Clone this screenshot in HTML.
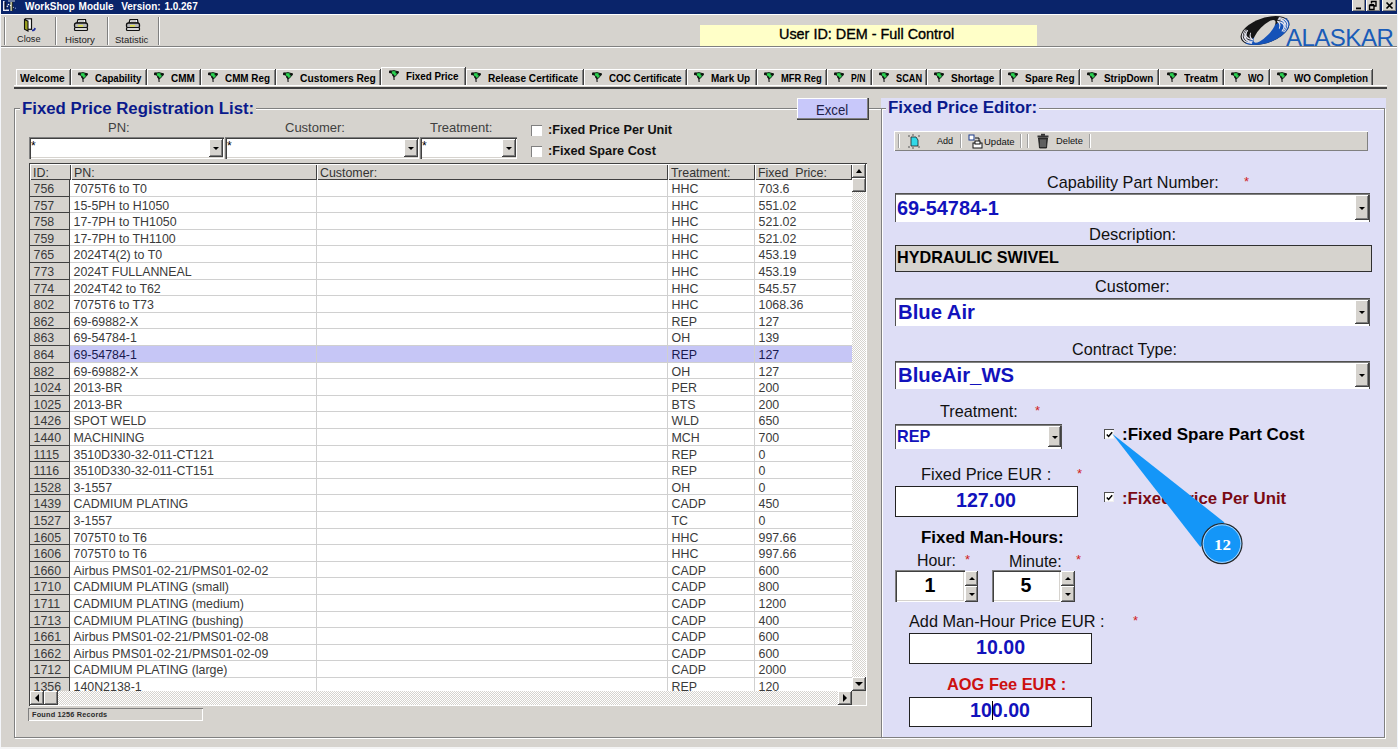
<!DOCTYPE html>
<html><head><meta charset="utf-8">
<style>
*{box-sizing:border-box;margin:0;padding:0}
html,body{width:1398px;height:749px;overflow:hidden;background:#d6d3ce;font-family:"Liberation Sans",sans-serif;position:relative}
.a{position:absolute}
.sunk{background:#fff;box-shadow:inset 1px 1px #808080,inset 2px 2px #404040,inset -1px -1px #fff,inset -2px -2px #d6d3ce}
.raised{background:#d6d3ce;box-shadow:inset -1px -1px #404040,inset 1px 1px #fff,inset -2px -2px #808080}
.tab{position:absolute;background:#d6d3ce;border-top:1px solid #fff;border-left:1px solid #fff;box-shadow:inset -1px 0 #808080, 1px 0 #404040;font:bold 10px "Liberation Sans",sans-serif;color:#000;white-space:nowrap}
.tab span{position:absolute;line-height:10px;transform-origin:0 0}
.tab .fl{position:absolute}
.tab.sel{z-index:2}
.row{position:absolute;left:30px;width:822px;height:17px;font-size:12.4px;color:#3a3a3a;white-space:nowrap}
.row>div{position:absolute;top:0;bottom:0;line-height:19px;padding-left:3.5px}
.row.t>div{background:none!important;border-color:transparent!important}
.c0{left:0;width:40px;background:#d6d3ce;border-bottom:1px solid #404040;border-right:1px solid #404040}
.c1{left:40px;width:247px;background:#fff;border-bottom:1px solid #d0d0d0;border-right:1px solid #d0d0d0}
.c2{left:287px;width:351px;background:#fff;border-bottom:1px solid #d0d0d0;border-right:1px solid #d0d0d0}
.c3{left:638px;width:87px;background:#fff;border-bottom:1px solid #d0d0d0;border-right:1px solid #d0d0d0}
.c4{left:725px;width:97px;background:#fff;border-bottom:1px solid #d0d0d0}
.selrow .c1,.selrow .c2,.selrow .c3,.selrow .c4{background:#c6c6f6;color:#1a1a50}
.hdr{position:absolute;top:164px;height:16px;background:#d6d3ce;box-shadow:inset 1px 1px #fff,inset -1px -1px #404040;font-size:12.4px;color:#333;line-height:18px;padding-left:3px}
.lbl{position:absolute;white-space:nowrap}
.drop{position:absolute;background:#d6d3ce;box-shadow:inset -1px -1px #404040,inset 1px 1px #fff,inset -2px -2px #808080}
.drop:after{content:"";position:absolute;left:50%;top:50%;margin-left:-3px;margin-top:-1px;border-left:3px solid transparent;border-right:3px solid transparent;border-top:3px solid #000}
.drop.up:after{border-top:0;border-bottom:3px solid #000;margin-top:-2px}
.sunkR{background:#fff;box-shadow:inset 1px 1px #505050,inset 0 2px #808080,inset -1px 0 #505050}
.chk{position:absolute;width:11px;height:11px;background:#fff;box-shadow:inset 1px 1px #808080,inset -1px -1px #fff}
.req{position:absolute;color:#d02020;font-size:13px}
</style></head><body>
<!-- title bar -->
<div class="a" style="left:0;top:0;width:1398px;height:14px;background:#0a246a"></div>
<svg class="a" style="left:0;top:0" width="18" height="14" viewBox="0 0 18 14"><rect x="0" y="0" width="1" height="14" fill="#e8ecf4"/><rect x="8" y="0" width="7" height="2" fill="#6a7aa0"/>
<rect x="3" y="1" width="1.6" height="10" fill="#e8e8f4"/><rect x="3" y="9.5" width="6" height="1.5" fill="#e8e8f4"/><rect x="4.6" y="2" width="1.2" height="7.5" fill="#101020"/>
<rect x="10.3" y="2" width="2" height="9" fill="#b8b890"/><rect x="12.3" y="2" width="0.8" height="9" fill="#202010"/>
<circle cx="8.5" cy="4.5" r="0.8" fill="#fff"/><circle cx="7.4" cy="6.4" r="0.8" fill="#ddd"/><circle cx="10.5" cy="5.5" r="0.7" fill="#fff"/><circle cx="13.5" cy="7.3" r="0.6" fill="#bbc"/><circle cx="15.5" cy="8.2" r="0.6" fill="#8899cc"/></svg>
<div class="lbl" style="left:25px;top:0px;color:#fff;font:bold 10px 'Liberation Sans',sans-serif;line-height:13px;word-spacing:1px">WorkShop Module&nbsp; Version: 1.0.267</div>
<div class="a" style="left:1352px;top:0;width:13px;height:11px;background:#d8d4cc;box-shadow:inset 1px 0 #fff,inset -1px -1px #808080"></div>
<div class="a" style="left:1366px;top:0;width:14px;height:11px;background:#d8d4cc;box-shadow:inset 1px 0 #fff,inset -1px -1px #808080"></div>
<div class="a" style="left:1382px;top:0;width:14px;height:11px;background:#d8d4cc;box-shadow:inset 1px 0 #fff,inset -1px -1px #808080"></div>
<svg class="a" style="left:1352px;top:0" width="44" height="11" viewBox="0 0 44 11"><rect x="4" y="7.5" width="5" height="1.8" fill="#000"/>
<path d="M17.5 5.5h4.5v4h-4.5z" fill="none" stroke="#000" stroke-width="1.4"/><path d="M19.5 3.5v-2h4.5v4.5h-2" fill="none" stroke="#000" stroke-width="1.4"/><path d="M17.5 4.5h4.5" stroke="#000" stroke-width="1"/>
<path d="M34.5 2.5l6 6M40.5 2.5l-6 6" stroke="#000" stroke-width="1.7"/></svg>
<div class="a" style="left:0;top:14px;width:1398px;height:1px;background:#fff"></div>
<div class="a" style="left:0;top:0;width:1px;height:749px;background:#f4f6fa;z-index:3"></div>
<!-- toolbar -->
<div class="a" style="left:0;top:46px;width:1398px;height:1px;background:#808080"></div>
<div class="a" style="left:0;top:47px;width:1398px;height:1px;background:#fff"></div>
<div class="a" style="left:4px;top:17px;width:1px;height:28px;background:#808080"></div><div class="a" style="left:5px;top:17px;width:1px;height:28px;background:#fff"></div>
<div class="a" style="left:55px;top:17px;width:1px;height:28px;background:#808080"></div><div class="a" style="left:56px;top:17px;width:1px;height:28px;background:#fff"></div>
<div class="a" style="left:107px;top:17px;width:1px;height:28px;background:#808080"></div><div class="a" style="left:108px;top:17px;width:1px;height:28px;background:#fff"></div>
<div class="a" style="left:158px;top:17px;width:1px;height:28px;background:#808080"></div><div class="a" style="left:159px;top:17px;width:1px;height:28px;background:#fff"></div>
<div class="lbl" style="left:17px;top:34px;font-size:9.2px;color:#222">Close</div>
<div class="lbl" style="left:65px;top:34px;font-size:9.6px;color:#222">History</div>
<div class="lbl" style="left:115px;top:34px;font-size:9.5px;color:#222">Statistic</div>
<svg class="a" style="left:23px;top:18px" width="15" height="14" viewBox="0 0 15 14"><rect x="2.5" y="0.8" width="6" height="10.5" fill="#fff" stroke="#111" stroke-width="1.2"/><path d="M1.5 1.5 L5 3.2 L5 13 L1.5 11.2 Z" fill="#9aa020" stroke="#111" stroke-width="1.1"/><path d="M9 12.5 Q11.5 12.5 12 10.5" stroke="#2030a0" stroke-width="1.6" fill="none"/><path d="M10.8 9.6 L13 10.6 L11.4 11.8 Z" fill="#2030a0"/></svg>
<svg class="a" style="left:73px;top:18px" width="16" height="14" viewBox="0 0 16 14"><path d="M5 1.5 L12.5 1.5 L13 5 L4 5 Z" fill="#f4f4f4" stroke="#111" stroke-width="1.2"/><path d="M6 3h5" stroke="#888" stroke-width="0.8"/><rect x="1.5" y="5" width="13" height="5" rx="2" fill="#b8b8b8" stroke="#111" stroke-width="1.3"/><rect x="5" y="7.2" width="5" height="1.3" fill="#e8e830"/><rect x="1.5" y="9.5" width="13" height="3" rx="1" fill="#d8d8d8" stroke="#111" stroke-width="1.2"/></svg>
<svg class="a" style="left:125px;top:18px" width="16" height="14" viewBox="0 0 16 14"><path d="M5 1.5 L12.5 1.5 L13 5 L4 5 Z" fill="#f4f4f4" stroke="#111" stroke-width="1.2"/><path d="M6 3h5" stroke="#888" stroke-width="0.8"/><rect x="1.5" y="5" width="13" height="5" rx="2" fill="#b8b8b8" stroke="#111" stroke-width="1.3"/><rect x="5" y="7.2" width="5" height="1.3" fill="#e8e830"/><rect x="1.5" y="9.5" width="13" height="3" rx="1" fill="#d8d8d8" stroke="#111" stroke-width="1.2"/></svg>
<!-- user id -->
<div class="a" style="left:700px;top:25px;width:337px;height:21px;background:#ffffc8"></div>
<div class="lbl" style="left:779px;top:26px;font-size:14.4px;color:#000;line-height:17px;-webkit-text-stroke:0.35px #000">User ID: DEM - Full Control</div>
<!-- logo -->
<svg class="a" style="left:1238px;top:15px" width="54" height="32" viewBox="0 0 54 32">
<defs><clipPath id="lc"><ellipse cx="0" cy="0" rx="22" ry="14.5" transform="translate(27 15.5) skewX(-36)"/></clipPath>
<clipPath id="le"><circle cx="5" cy="24" r="10"/><circle cx="49" cy="8" r="10"/></clipPath></defs>
<g clip-path="url(#lc)">
<rect x="0" y="0" width="54" height="32" fill="#161616"/>
<path d="M0 32 L4 30 L48 3 L54 0 L54 32 Z" fill="#1552b8"/>
</g>
<g clip-path="url(#le)"><g transform="translate(27 15.5) skewX(-36)" fill="none" stroke="#e4e4ee" stroke-width="0.9">
<ellipse cx="1.5" cy="0" rx="19" ry="13"/><ellipse cx="3" cy="0" rx="16" ry="11"/><ellipse cx="4.5" cy="0" rx="13" ry="9"/>
<ellipse cx="-1.5" cy="0" rx="19" ry="13"/><ellipse cx="-3" cy="0" rx="16" ry="11"/><ellipse cx="-4.5" cy="0" rx="13" ry="9"/>
</g></g>
<ellipse cx="0" cy="0" rx="15" ry="5" transform="translate(26.5 16.3) rotate(-46)" fill="#d6d3ce"/>
</svg>
<div class="lbl" style="left:1286px;top:24px;font-size:24px;color:#1a5cb8;letter-spacing:-0.5px;line-height:28px">ALASKAR</div>
<!-- tabs -->
<div class="a" style="left:14px;top:85px;width:1373px;height:1px;background:#fff"></div>
<div class="a" style="left:14px;top:87px;width:1373px;height:2px;background:#404040"></div>
<div class="tab" style="left:16px;top:69px;width:54px;height:16px"><span style="left:3.00px;top:3.700000000000003px;transform:scaleX(1.021)">Welcome</span></div>
<div class="tab" style="left:71px;top:69px;width:75px;height:16px"><svg class="fl" style="left:6.10px;top:1.5px" width="11" height="12" viewBox="0 0 11 12"><path d="M1.5 1.2 L5 0.6 L9.3 1.8 L8.2 4.3 L5.6 6.8 L3.2 4.2 Z" fill="#2ad050" stroke="#0a160a" stroke-width="0.9" stroke-linejoin="round"/><rect x="0" y="0.4" width="2.7" height="2.8" rx="0.8" fill="#111"/><rect x="6.6" y="1.2" width="3.2" height="2.3" rx="0.8" fill="#111"/><path d="M3.6 4.6 L5.4 7" stroke="#111" stroke-width="1.6"/><path d="M4.9 7 L5.1 10" stroke="#222" stroke-width="1.2"/></svg><span style="left:23.10px;top:3.700000000000003px;transform:scaleX(0.969)">Capability</span></div>
<div class="tab" style="left:147px;top:69px;width:53px;height:16px"><svg class="fl" style="left:6.00px;top:1.5px" width="11" height="12" viewBox="0 0 11 12"><path d="M1.5 1.2 L5 0.6 L9.3 1.8 L8.2 4.3 L5.6 6.8 L3.2 4.2 Z" fill="#2ad050" stroke="#0a160a" stroke-width="0.9" stroke-linejoin="round"/><rect x="0" y="0.4" width="2.7" height="2.8" rx="0.8" fill="#111"/><rect x="6.6" y="1.2" width="3.2" height="2.3" rx="0.8" fill="#111"/><path d="M3.6 4.6 L5.4 7" stroke="#111" stroke-width="1.6"/><path d="M4.9 7 L5.1 10" stroke="#222" stroke-width="1.2"/></svg><span style="left:23.00px;top:3.700000000000003px;transform:scaleX(0.996)">CMM</span></div>
<div class="tab" style="left:201px;top:69px;width:74px;height:16px"><svg class="fl" style="left:6.30px;top:1.5px" width="11" height="12" viewBox="0 0 11 12"><path d="M1.5 1.2 L5 0.6 L9.3 1.8 L8.2 4.3 L5.6 6.8 L3.2 4.2 Z" fill="#2ad050" stroke="#0a160a" stroke-width="0.9" stroke-linejoin="round"/><rect x="0" y="0.4" width="2.7" height="2.8" rx="0.8" fill="#111"/><rect x="6.6" y="1.2" width="3.2" height="2.3" rx="0.8" fill="#111"/><path d="M3.6 4.6 L5.4 7" stroke="#111" stroke-width="1.6"/><path d="M4.9 7 L5.1 10" stroke="#222" stroke-width="1.2"/></svg><span style="left:23.30px;top:3.700000000000003px;transform:scaleX(0.987)">CMM Reg</span></div>
<div class="tab" style="left:276px;top:69px;width:104px;height:16px"><svg class="fl" style="left:6.40px;top:1.5px" width="11" height="12" viewBox="0 0 11 12"><path d="M1.5 1.2 L5 0.6 L9.3 1.8 L8.2 4.3 L5.6 6.8 L3.2 4.2 Z" fill="#2ad050" stroke="#0a160a" stroke-width="0.9" stroke-linejoin="round"/><rect x="0" y="0.4" width="2.7" height="2.8" rx="0.8" fill="#111"/><rect x="6.6" y="1.2" width="3.2" height="2.3" rx="0.8" fill="#111"/><path d="M3.6 4.6 L5.4 7" stroke="#111" stroke-width="1.6"/><path d="M4.9 7 L5.1 10" stroke="#222" stroke-width="1.2"/></svg><span style="left:23.40px;top:3.700000000000003px;transform:scaleX(1.026)">Customers Reg</span></div>
<div class="tab sel" style="left:381px;top:67px;width:84px;height:18px"><svg class="fl" style="left:6.60px;top:1.5px" width="11" height="12" viewBox="0 0 11 12"><path d="M1.5 1.2 L5 0.6 L9.3 1.8 L8.2 4.3 L5.6 6.8 L3.2 4.2 Z" fill="#2ad050" stroke="#0a160a" stroke-width="0.9" stroke-linejoin="round"/><rect x="0" y="0.4" width="2.7" height="2.8" rx="0.8" fill="#111"/><rect x="6.6" y="1.2" width="3.2" height="2.3" rx="0.8" fill="#111"/><path d="M3.6 4.6 L5.4 7" stroke="#111" stroke-width="1.6"/><path d="M4.9 7 L5.1 10" stroke="#222" stroke-width="1.2"/></svg><span style="left:23.60px;top:3.700000000000003px;transform:scaleX(0.985)">Fixed Price</span></div>
<div class="tab" style="left:466px;top:69px;width:117px;height:16px"><svg class="fl" style="left:4.20px;top:1.5px" width="11" height="12" viewBox="0 0 11 12"><path d="M1.5 1.2 L5 0.6 L9.3 1.8 L8.2 4.3 L5.6 6.8 L3.2 4.2 Z" fill="#2ad050" stroke="#0a160a" stroke-width="0.9" stroke-linejoin="round"/><rect x="0" y="0.4" width="2.7" height="2.8" rx="0.8" fill="#111"/><rect x="6.6" y="1.2" width="3.2" height="2.3" rx="0.8" fill="#111"/><path d="M3.6 4.6 L5.4 7" stroke="#111" stroke-width="1.6"/><path d="M4.9 7 L5.1 10" stroke="#222" stroke-width="1.2"/></svg><span style="left:21.20px;top:3.700000000000003px;transform:scaleX(1.007)">Release Certificate</span></div>
<div class="tab" style="left:584px;top:69px;width:102px;height:16px"><svg class="fl" style="left:7.10px;top:1.5px" width="11" height="12" viewBox="0 0 11 12"><path d="M1.5 1.2 L5 0.6 L9.3 1.8 L8.2 4.3 L5.6 6.8 L3.2 4.2 Z" fill="#2ad050" stroke="#0a160a" stroke-width="0.9" stroke-linejoin="round"/><rect x="0" y="0.4" width="2.7" height="2.8" rx="0.8" fill="#111"/><rect x="6.6" y="1.2" width="3.2" height="2.3" rx="0.8" fill="#111"/><path d="M3.6 4.6 L5.4 7" stroke="#111" stroke-width="1.6"/><path d="M4.9 7 L5.1 10" stroke="#222" stroke-width="1.2"/></svg><span style="left:24.10px;top:3.700000000000003px;transform:scaleX(0.982)">COC Certificate</span></div>
<div class="tab" style="left:687px;top:69px;width:69px;height:16px"><svg class="fl" style="left:6.30px;top:1.5px" width="11" height="12" viewBox="0 0 11 12"><path d="M1.5 1.2 L5 0.6 L9.3 1.8 L8.2 4.3 L5.6 6.8 L3.2 4.2 Z" fill="#2ad050" stroke="#0a160a" stroke-width="0.9" stroke-linejoin="round"/><rect x="0" y="0.4" width="2.7" height="2.8" rx="0.8" fill="#111"/><rect x="6.6" y="1.2" width="3.2" height="2.3" rx="0.8" fill="#111"/><path d="M3.6 4.6 L5.4 7" stroke="#111" stroke-width="1.6"/><path d="M4.9 7 L5.1 10" stroke="#222" stroke-width="1.2"/></svg><span style="left:23.30px;top:3.700000000000003px;transform:scaleX(0.992)">Mark Up</span></div>
<div class="tab" style="left:757px;top:69px;width:69px;height:16px"><svg class="fl" style="left:5.50px;top:1.5px" width="11" height="12" viewBox="0 0 11 12"><path d="M1.5 1.2 L5 0.6 L9.3 1.8 L8.2 4.3 L5.6 6.8 L3.2 4.2 Z" fill="#2ad050" stroke="#0a160a" stroke-width="0.9" stroke-linejoin="round"/><rect x="0" y="0.4" width="2.7" height="2.8" rx="0.8" fill="#111"/><rect x="6.6" y="1.2" width="3.2" height="2.3" rx="0.8" fill="#111"/><path d="M3.6 4.6 L5.4 7" stroke="#111" stroke-width="1.6"/><path d="M4.9 7 L5.1 10" stroke="#222" stroke-width="1.2"/></svg><span style="left:22.50px;top:3.700000000000003px;transform:scaleX(0.941)">MFR Reg</span></div>
<div class="tab" style="left:827px;top:69px;width:44px;height:16px"><svg class="fl" style="left:6.25px;top:1.5px" width="11" height="12" viewBox="0 0 11 12"><path d="M1.5 1.2 L5 0.6 L9.3 1.8 L8.2 4.3 L5.6 6.8 L3.2 4.2 Z" fill="#2ad050" stroke="#0a160a" stroke-width="0.9" stroke-linejoin="round"/><rect x="0" y="0.4" width="2.7" height="2.8" rx="0.8" fill="#111"/><rect x="6.6" y="1.2" width="3.2" height="2.3" rx="0.8" fill="#111"/><path d="M3.6 4.6 L5.4 7" stroke="#111" stroke-width="1.6"/><path d="M4.9 7 L5.1 10" stroke="#222" stroke-width="1.2"/></svg><span style="left:23.25px;top:3.700000000000003px;transform:scaleX(0.868)">P/N</span></div>
<div class="tab" style="left:872px;top:69px;width:54px;height:16px"><svg class="fl" style="left:5.75px;top:1.5px" width="11" height="12" viewBox="0 0 11 12"><path d="M1.5 1.2 L5 0.6 L9.3 1.8 L8.2 4.3 L5.6 6.8 L3.2 4.2 Z" fill="#2ad050" stroke="#0a160a" stroke-width="0.9" stroke-linejoin="round"/><rect x="0" y="0.4" width="2.7" height="2.8" rx="0.8" fill="#111"/><rect x="6.6" y="1.2" width="3.2" height="2.3" rx="0.8" fill="#111"/><path d="M3.6 4.6 L5.4 7" stroke="#111" stroke-width="1.6"/><path d="M4.9 7 L5.1 10" stroke="#222" stroke-width="1.2"/></svg><span style="left:22.75px;top:3.700000000000003px;transform:scaleX(0.919)">SCAN</span></div>
<div class="tab" style="left:927px;top:69px;width:73px;height:16px"><svg class="fl" style="left:6.25px;top:1.5px" width="11" height="12" viewBox="0 0 11 12"><path d="M1.5 1.2 L5 0.6 L9.3 1.8 L8.2 4.3 L5.6 6.8 L3.2 4.2 Z" fill="#2ad050" stroke="#0a160a" stroke-width="0.9" stroke-linejoin="round"/><rect x="0" y="0.4" width="2.7" height="2.8" rx="0.8" fill="#111"/><rect x="6.6" y="1.2" width="3.2" height="2.3" rx="0.8" fill="#111"/><path d="M3.6 4.6 L5.4 7" stroke="#111" stroke-width="1.6"/><path d="M4.9 7 L5.1 10" stroke="#222" stroke-width="1.2"/></svg><span style="left:23.25px;top:3.700000000000003px;transform:scaleX(0.999)">Shortage</span></div>
<div class="tab" style="left:1001px;top:69px;width:78px;height:16px"><svg class="fl" style="left:5.50px;top:1.5px" width="11" height="12" viewBox="0 0 11 12"><path d="M1.5 1.2 L5 0.6 L9.3 1.8 L8.2 4.3 L5.6 6.8 L3.2 4.2 Z" fill="#2ad050" stroke="#0a160a" stroke-width="0.9" stroke-linejoin="round"/><rect x="0" y="0.4" width="2.7" height="2.8" rx="0.8" fill="#111"/><rect x="6.6" y="1.2" width="3.2" height="2.3" rx="0.8" fill="#111"/><path d="M3.6 4.6 L5.4 7" stroke="#111" stroke-width="1.6"/><path d="M4.9 7 L5.1 10" stroke="#222" stroke-width="1.2"/></svg><span style="left:22.50px;top:3.700000000000003px;transform:scaleX(1.002)">Spare Reg</span></div>
<div class="tab" style="left:1080px;top:69px;width:78px;height:16px"><svg class="fl" style="left:6.00px;top:1.5px" width="11" height="12" viewBox="0 0 11 12"><path d="M1.5 1.2 L5 0.6 L9.3 1.8 L8.2 4.3 L5.6 6.8 L3.2 4.2 Z" fill="#2ad050" stroke="#0a160a" stroke-width="0.9" stroke-linejoin="round"/><rect x="0" y="0.4" width="2.7" height="2.8" rx="0.8" fill="#111"/><rect x="6.6" y="1.2" width="3.2" height="2.3" rx="0.8" fill="#111"/><path d="M3.6 4.6 L5.4 7" stroke="#111" stroke-width="1.6"/><path d="M4.9 7 L5.1 10" stroke="#222" stroke-width="1.2"/></svg><span style="left:23.00px;top:3.700000000000003px;transform:scaleX(0.986)">StripDown</span></div>
<div class="tab" style="left:1159px;top:69px;width:64px;height:16px"><svg class="fl" style="left:7.00px;top:1.5px" width="11" height="12" viewBox="0 0 11 12"><path d="M1.5 1.2 L5 0.6 L9.3 1.8 L8.2 4.3 L5.6 6.8 L3.2 4.2 Z" fill="#2ad050" stroke="#0a160a" stroke-width="0.9" stroke-linejoin="round"/><rect x="0" y="0.4" width="2.7" height="2.8" rx="0.8" fill="#111"/><rect x="6.6" y="1.2" width="3.2" height="2.3" rx="0.8" fill="#111"/><path d="M3.6 4.6 L5.4 7" stroke="#111" stroke-width="1.6"/><path d="M4.9 7 L5.1 10" stroke="#222" stroke-width="1.2"/></svg><span style="left:24.00px;top:3.700000000000003px;transform:scaleX(1.037)">Treatm</span></div>
<div class="tab" style="left:1224px;top:69px;width:45px;height:16px"><svg class="fl" style="left:5.90px;top:1.5px" width="11" height="12" viewBox="0 0 11 12"><path d="M1.5 1.2 L5 0.6 L9.3 1.8 L8.2 4.3 L5.6 6.8 L3.2 4.2 Z" fill="#2ad050" stroke="#0a160a" stroke-width="0.9" stroke-linejoin="round"/><rect x="0" y="0.4" width="2.7" height="2.8" rx="0.8" fill="#111"/><rect x="6.6" y="1.2" width="3.2" height="2.3" rx="0.8" fill="#111"/><path d="M3.6 4.6 L5.4 7" stroke="#111" stroke-width="1.6"/><path d="M4.9 7 L5.1 10" stroke="#222" stroke-width="1.2"/></svg><span style="left:22.90px;top:3.700000000000003px;transform:scaleX(0.913)">WO</span></div>
<div class="tab" style="left:1270px;top:69px;width:102px;height:16px"><svg class="fl" style="left:5.50px;top:1.5px" width="11" height="12" viewBox="0 0 11 12"><path d="M1.5 1.2 L5 0.6 L9.3 1.8 L8.2 4.3 L5.6 6.8 L3.2 4.2 Z" fill="#2ad050" stroke="#0a160a" stroke-width="0.9" stroke-linejoin="round"/><rect x="0" y="0.4" width="2.7" height="2.8" rx="0.8" fill="#111"/><rect x="6.6" y="1.2" width="3.2" height="2.3" rx="0.8" fill="#111"/><path d="M3.6 4.6 L5.4 7" stroke="#111" stroke-width="1.6"/><path d="M4.9 7 L5.1 10" stroke="#222" stroke-width="1.2"/></svg><span style="left:22.50px;top:3.700000000000003px;transform:scaleX(0.987)">WO Completion</span></div>
<!-- left group box -->
<div class="a" style="left:14px;top:108px;width:871px;height:630px;border:1px solid #808080;box-shadow:inset 1px 1px #fff, 1px 1px #fff"></div>
<div class="lbl" style="left:20px;top:99px;padding:0 2px;background:#d6d3ce;font:bold 16.8px 'Liberation Sans',sans-serif;color:#0a1a8c;line-height:20px">Fixed Price Registration List:</div>
<div class="lbl" style="left:108px;top:120px;font-size:13px;color:#404040">PN:</div>
<div class="lbl" style="left:285px;top:120px;font-size:13px;color:#404040">Customer:</div>
<div class="lbl" style="left:430px;top:120px;font-size:13px;color:#404040">Treatment:</div>
<div class="a sunk" style="left:29px;top:137px;width:195px;height:22px"></div>
<div class="a sunk" style="left:225px;top:137px;width:194px;height:22px"></div>
<div class="a sunk" style="left:420px;top:137px;width:97px;height:22px"></div>
<div class="lbl" style="left:31px;top:139px;font-size:12px">*</div>
<div class="lbl" style="left:227px;top:139px;font-size:12px">*</div>
<div class="lbl" style="left:422px;top:139px;font-size:12px">*</div>
<div class="drop" style="left:209px;top:139px;width:14px;height:18px"></div>
<div class="drop" style="left:404px;top:139px;width:14px;height:18px"></div>
<div class="drop" style="left:502px;top:139px;width:14px;height:18px"></div>
<div class="chk" style="left:531px;top:125px"></div>
<div class="chk" style="left:531px;top:146px"></div>
<div class="lbl" style="left:548px;top:123px;font:bold 12.7px 'Liberation Sans';color:#111">:Fixed Price Per Unit</div>
<div class="lbl" style="left:548px;top:144px;font:bold 12.7px 'Liberation Sans';color:#111">:Fixed Spare Cost</div>
<!-- excel button -->
<div class="a" style="left:797px;top:98px;width:72px;height:22px;background:#c8c8fa;box-shadow:inset -1px -1px #404040,inset -2px -2px #808080,inset 1px 1px #fff"></div>
<div class="lbl" style="left:815.5px;top:100.7px;font-size:14.8px;color:#202048;line-height:18px;transform:scaleX(0.89);transform-origin:0 0">Excel</div>
<!-- grid -->
<div class="a" style="left:29px;top:163px;width:838px;height:543px;background:#d6d3ce;box-shadow:inset 1px 1px #404040,inset -1px -1px #fff"></div>
<div class="hdr" style="left:30px;width:41px">ID:</div>
<div class="hdr" style="left:71px;width:246px">PN:</div>
<div class="hdr" style="left:317px;width:351px">Customer:</div>
<div class="hdr" style="left:668px;width:87px">Treatment:</div>
<div class="hdr" style="left:755px;width:97px">Fixed_Price:</div>
<div class="a" style="left:30px;top:180px;width:822px;height:511px;overflow:hidden">
<div style="position:absolute;left:-30px;top:-180px;width:900px;height:800px">
<div class="row" style="top:180px;height:17px"><div class="c0"></div><div class="c1"></div><div class="c2"></div><div class="c3"></div><div class="c4"></div></div>
<div class="row" style="top:197px;height:16px"><div class="c0"></div><div class="c1"></div><div class="c2"></div><div class="c3"></div><div class="c4"></div></div>
<div class="row" style="top:213px;height:17px"><div class="c0"></div><div class="c1"></div><div class="c2"></div><div class="c3"></div><div class="c4"></div></div>
<div class="row" style="top:230px;height:16px"><div class="c0"></div><div class="c1"></div><div class="c2"></div><div class="c3"></div><div class="c4"></div></div>
<div class="row" style="top:246px;height:17px"><div class="c0"></div><div class="c1"></div><div class="c2"></div><div class="c3"></div><div class="c4"></div></div>
<div class="row" style="top:263px;height:17px"><div class="c0"></div><div class="c1"></div><div class="c2"></div><div class="c3"></div><div class="c4"></div></div>
<div class="row" style="top:280px;height:16px"><div class="c0"></div><div class="c1"></div><div class="c2"></div><div class="c3"></div><div class="c4"></div></div>
<div class="row" style="top:296px;height:17px"><div class="c0"></div><div class="c1"></div><div class="c2"></div><div class="c3"></div><div class="c4"></div></div>
<div class="row" style="top:313px;height:16px"><div class="c0"></div><div class="c1"></div><div class="c2"></div><div class="c3"></div><div class="c4"></div></div>
<div class="row" style="top:329px;height:17px"><div class="c0"></div><div class="c1"></div><div class="c2"></div><div class="c3"></div><div class="c4"></div></div>
<div class="row selrow" style="top:346px;height:17px"><div class="c0"></div><div class="c1"></div><div class="c2"></div><div class="c3"></div><div class="c4"></div></div>
<div class="row" style="top:363px;height:16px"><div class="c0"></div><div class="c1"></div><div class="c2"></div><div class="c3"></div><div class="c4"></div></div>
<div class="row" style="top:379px;height:17px"><div class="c0"></div><div class="c1"></div><div class="c2"></div><div class="c3"></div><div class="c4"></div></div>
<div class="row" style="top:396px;height:16px"><div class="c0"></div><div class="c1"></div><div class="c2"></div><div class="c3"></div><div class="c4"></div></div>
<div class="row" style="top:412px;height:17px"><div class="c0"></div><div class="c1"></div><div class="c2"></div><div class="c3"></div><div class="c4"></div></div>
<div class="row" style="top:429px;height:17px"><div class="c0"></div><div class="c1"></div><div class="c2"></div><div class="c3"></div><div class="c4"></div></div>
<div class="row" style="top:446px;height:16px"><div class="c0"></div><div class="c1"></div><div class="c2"></div><div class="c3"></div><div class="c4"></div></div>
<div class="row" style="top:462px;height:17px"><div class="c0"></div><div class="c1"></div><div class="c2"></div><div class="c3"></div><div class="c4"></div></div>
<div class="row" style="top:479px;height:16px"><div class="c0"></div><div class="c1"></div><div class="c2"></div><div class="c3"></div><div class="c4"></div></div>
<div class="row" style="top:495px;height:17px"><div class="c0"></div><div class="c1"></div><div class="c2"></div><div class="c3"></div><div class="c4"></div></div>
<div class="row" style="top:512px;height:17px"><div class="c0"></div><div class="c1"></div><div class="c2"></div><div class="c3"></div><div class="c4"></div></div>
<div class="row" style="top:529px;height:16px"><div class="c0"></div><div class="c1"></div><div class="c2"></div><div class="c3"></div><div class="c4"></div></div>
<div class="row" style="top:545px;height:17px"><div class="c0"></div><div class="c1"></div><div class="c2"></div><div class="c3"></div><div class="c4"></div></div>
<div class="row" style="top:562px;height:16px"><div class="c0"></div><div class="c1"></div><div class="c2"></div><div class="c3"></div><div class="c4"></div></div>
<div class="row" style="top:578px;height:17px"><div class="c0"></div><div class="c1"></div><div class="c2"></div><div class="c3"></div><div class="c4"></div></div>
<div class="row" style="top:595px;height:17px"><div class="c0"></div><div class="c1"></div><div class="c2"></div><div class="c3"></div><div class="c4"></div></div>
<div class="row" style="top:612px;height:16px"><div class="c0"></div><div class="c1"></div><div class="c2"></div><div class="c3"></div><div class="c4"></div></div>
<div class="row" style="top:628px;height:17px"><div class="c0"></div><div class="c1"></div><div class="c2"></div><div class="c3"></div><div class="c4"></div></div>
<div class="row" style="top:645px;height:16px"><div class="c0"></div><div class="c1"></div><div class="c2"></div><div class="c3"></div><div class="c4"></div></div>
<div class="row" style="top:661px;height:17px"><div class="c0"></div><div class="c1"></div><div class="c2"></div><div class="c3"></div><div class="c4"></div></div>
<div class="row" style="top:678px;height:17px"><div class="c0"></div><div class="c1"></div><div class="c2"></div><div class="c3"></div><div class="c4"></div></div>
<div class="row t" style="top:180px;height:17px"><div class="c0">756</div><div class="c1">7075T6 to T0</div><div class="c2"></div><div class="c3">HHC</div><div class="c4">703.6</div></div>
<div class="row t" style="top:197px;height:16px"><div class="c0">757</div><div class="c1">15-5PH to H1050</div><div class="c2"></div><div class="c3">HHC</div><div class="c4">551.02</div></div>
<div class="row t" style="top:213px;height:17px"><div class="c0">758</div><div class="c1">17-7PH to TH1050</div><div class="c2"></div><div class="c3">HHC</div><div class="c4">521.02</div></div>
<div class="row t" style="top:230px;height:16px"><div class="c0">759</div><div class="c1">17-7PH to TH1100</div><div class="c2"></div><div class="c3">HHC</div><div class="c4">521.02</div></div>
<div class="row t" style="top:246px;height:17px"><div class="c0">765</div><div class="c1">2024T4(2) to T0</div><div class="c2"></div><div class="c3">HHC</div><div class="c4">453.19</div></div>
<div class="row t" style="top:263px;height:17px"><div class="c0">773</div><div class="c1">2024T FULLANNEAL</div><div class="c2"></div><div class="c3">HHC</div><div class="c4">453.19</div></div>
<div class="row t" style="top:280px;height:16px"><div class="c0">774</div><div class="c1">2024T42 to T62</div><div class="c2"></div><div class="c3">HHC</div><div class="c4">545.57</div></div>
<div class="row t" style="top:296px;height:17px"><div class="c0">802</div><div class="c1">7075T6 to T73</div><div class="c2"></div><div class="c3">HHC</div><div class="c4">1068.36</div></div>
<div class="row t" style="top:313px;height:16px"><div class="c0">862</div><div class="c1">69-69882-X</div><div class="c2"></div><div class="c3">REP</div><div class="c4">127</div></div>
<div class="row t" style="top:329px;height:17px"><div class="c0">863</div><div class="c1">69-54784-1</div><div class="c2"></div><div class="c3">OH</div><div class="c4">139</div></div>
<div class="row t selrow" style="top:346px;height:17px"><div class="c0">864</div><div class="c1">69-54784-1</div><div class="c2"></div><div class="c3">REP</div><div class="c4">127</div></div>
<div class="row t" style="top:363px;height:16px"><div class="c0">882</div><div class="c1">69-69882-X</div><div class="c2"></div><div class="c3">OH</div><div class="c4">127</div></div>
<div class="row t" style="top:379px;height:17px"><div class="c0">1024</div><div class="c1">2013-BR</div><div class="c2"></div><div class="c3">PER</div><div class="c4">200</div></div>
<div class="row t" style="top:396px;height:16px"><div class="c0">1025</div><div class="c1">2013-BR</div><div class="c2"></div><div class="c3">BTS</div><div class="c4">200</div></div>
<div class="row t" style="top:412px;height:17px"><div class="c0">1426</div><div class="c1">SPOT WELD</div><div class="c2"></div><div class="c3">WLD</div><div class="c4">650</div></div>
<div class="row t" style="top:429px;height:17px"><div class="c0">1440</div><div class="c1">MACHINING</div><div class="c2"></div><div class="c3">MCH</div><div class="c4">700</div></div>
<div class="row t" style="top:446px;height:16px"><div class="c0">1115</div><div class="c1">3510D330-32-011-CT121</div><div class="c2"></div><div class="c3">REP</div><div class="c4">0</div></div>
<div class="row t" style="top:462px;height:17px"><div class="c0">1116</div><div class="c1">3510D330-32-011-CT151</div><div class="c2"></div><div class="c3">REP</div><div class="c4">0</div></div>
<div class="row t" style="top:479px;height:16px"><div class="c0">1528</div><div class="c1">3-1557</div><div class="c2"></div><div class="c3">OH</div><div class="c4">0</div></div>
<div class="row t" style="top:495px;height:17px"><div class="c0">1439</div><div class="c1">CADMIUM PLATING</div><div class="c2"></div><div class="c3">CADP</div><div class="c4">450</div></div>
<div class="row t" style="top:512px;height:17px"><div class="c0">1527</div><div class="c1">3-1557</div><div class="c2"></div><div class="c3">TC</div><div class="c4">0</div></div>
<div class="row t" style="top:529px;height:16px"><div class="c0">1605</div><div class="c1">7075T0 to T6</div><div class="c2"></div><div class="c3">HHC</div><div class="c4">997.66</div></div>
<div class="row t" style="top:545px;height:17px"><div class="c0">1606</div><div class="c1">7075T0 to T6</div><div class="c2"></div><div class="c3">HHC</div><div class="c4">997.66</div></div>
<div class="row t" style="top:562px;height:16px"><div class="c0">1660</div><div class="c1">Airbus PMS01-02-21/PMS01-02-02</div><div class="c2"></div><div class="c3">CADP</div><div class="c4">600</div></div>
<div class="row t" style="top:578px;height:17px"><div class="c0">1710</div><div class="c1">CADMIUM PLATING (small)</div><div class="c2"></div><div class="c3">CADP</div><div class="c4">800</div></div>
<div class="row t" style="top:595px;height:17px"><div class="c0">1711</div><div class="c1">CADMIUM PLATING (medium)</div><div class="c2"></div><div class="c3">CADP</div><div class="c4">1200</div></div>
<div class="row t" style="top:612px;height:16px"><div class="c0">1713</div><div class="c1">CADMIUM PLATING (bushing)</div><div class="c2"></div><div class="c3">CADP</div><div class="c4">400</div></div>
<div class="row t" style="top:628px;height:17px"><div class="c0">1661</div><div class="c1">Airbus PMS01-02-21/PMS01-02-08</div><div class="c2"></div><div class="c3">CADP</div><div class="c4">600</div></div>
<div class="row t" style="top:645px;height:16px"><div class="c0">1662</div><div class="c1">Airbus PMS01-02-21/PMS01-02-09</div><div class="c2"></div><div class="c3">CADP</div><div class="c4">600</div></div>
<div class="row t" style="top:661px;height:17px"><div class="c0">1712</div><div class="c1">CADMIUM PLATING (large)</div><div class="c2"></div><div class="c3">CADP</div><div class="c4">2000</div></div>
<div class="row t" style="top:678px;height:17px"><div class="c0">1356</div><div class="c1">140N2138-1</div><div class="c2"></div><div class="c3">REP</div><div class="c4">120</div></div>
</div></div>
<!-- vertical scrollbar -->
<div class="a" style="left:852px;top:164px;width:14px;height:527px;background:repeating-conic-gradient(#fff 0 25%, #d6d3ce 0 50%) 0 0/2px 2px"></div>
<div class="a raised" style="left:852px;top:164px;width:14px;height:14px"></div>
<div class="a" style="left:855.5px;top:169px;border-left:3.5px solid transparent;border-right:3.5px solid transparent;border-bottom:4px solid #000;width:0;height:0"></div>
<div class="a raised" style="left:852px;top:178px;width:14px;height:14px"></div>
<div class="a raised" style="left:852px;top:677px;width:14px;height:14px"></div>
<div class="a" style="left:855px;top:682px;border-left:4px solid transparent;border-right:4px solid transparent;border-top:4px solid #000;width:0;height:0"></div>
<!-- horizontal scrollbar -->
<div class="a" style="left:30px;top:691px;width:822px;height:14px;background:repeating-conic-gradient(#fff 0 25%, #d6d3ce 0 50%) 0 0/2px 2px"></div>
<div class="a raised" style="left:30px;top:691px;width:14px;height:14px"></div>
<div class="a" style="left:35px;top:694px;border-top:4px solid transparent;border-bottom:4px solid transparent;border-right:4px solid #000;width:0;height:0"></div>
<div class="a raised" style="left:44px;top:691px;width:14px;height:14px"></div>
<div class="a raised" style="left:838px;top:691px;width:14px;height:14px"></div>
<div class="a" style="left:843px;top:694px;border-top:4px solid transparent;border-bottom:4px solid transparent;border-left:4px solid #000;width:0;height:0"></div>
<div class="a" style="left:852px;top:691px;width:14px;height:14px;background:#d6d3ce"></div>
<!-- status -->
<div class="a" style="left:28px;top:708px;width:175px;height:13px;box-shadow:inset 1px 1px #808080,inset -1px -1px #fff"></div>
<div class="lbl" style="left:32px;top:708.5px;font:bold 7.3px 'Liberation Sans';letter-spacing:0.2px;color:#2a2a2a;line-height:11px">Found 1256 Records</div>
<!-- right panel -->
<div class="a" style="left:881px;top:98px;width:505px;height:641px;background:#dedef6"></div>
<div class="a" style="left:881px;top:108px;width:504px;height:630px;border:1px solid #808080;box-shadow:inset 1px 1px #fff,1px 1px #fff"></div>
<div class="a" style="left:1397px;top:0;width:1px;height:749px;background:#f0f4fa;z-index:3"></div>
<div class="lbl" style="left:886px;top:98px;padding:0 2px;background:#dedef6;font:bold 16.9px 'Liberation Sans',sans-serif;color:#0a1a8c;line-height:20px">Fixed Price Editor:</div>
<!-- editor toolbar -->
<div class="a" style="left:894px;top:131px;width:474px;height:20px;background:#d6d3ce;box-shadow:inset 1px 1px #fff,inset -1px -1px #808080"></div>
<div class="a" style="left:898px;top:134px;width:1px;height:14px;background:#a0a0a0"></div><div class="a" style="left:899px;top:134px;width:1px;height:14px;background:#fff"></div>
<div class="a" style="left:960px;top:134px;width:1px;height:14px;background:#a0a0a0"></div><div class="a" style="left:961px;top:134px;width:1px;height:14px;background:#fff"></div>
<div class="a" style="left:1020px;top:134px;width:1px;height:14px;background:#a0a0a0"></div><div class="a" style="left:1021px;top:134px;width:1px;height:14px;background:#fff"></div>
<div class="a" style="left:1027px;top:134px;width:1px;height:14px;background:#a0a0a0"></div><div class="a" style="left:1028px;top:134px;width:1px;height:14px;background:#fff"></div>
<div class="a" style="left:1089px;top:134px;width:1px;height:14px;background:#a0a0a0"></div><div class="a" style="left:1090px;top:134px;width:1px;height:14px;background:#fff"></div>
<svg class="a" style="left:907px;top:134px" width="14" height="15" viewBox="0 0 14 15"><path d="M4 3 L9 3 L11 6 L11 12 L4 12 Z" fill="#30d8e8" stroke="#222" stroke-width="0.8"/><g stroke="#555" stroke-width="1"><path d="M1 2h2M11 2h2M1 13h2M11 13h2M6 0v2M6 13v2"/></g></svg>
<div class="lbl" style="left:937px;top:135.5px;font-size:9px;color:#111;line-height:11px">Add</div>
<svg class="a" style="left:968px;top:134px" width="15" height="15" viewBox="0 0 15 15"><rect x="1" y="1" width="5" height="5" fill="#fff" stroke="#1a3a8a"/><path d="M7 4 L11 4 L11 7" stroke="#111" fill="none"/><rect x="5" y="9" width="9" height="5" fill="#fff" stroke="#111"/><rect x="7" y="7" width="5" height="3" fill="#fff" stroke="#111"/></svg>
<div class="lbl" style="left:984px;top:135.5px;font-size:9.5px;color:#111;line-height:11px">Update</div>
<svg class="a" style="left:1037px;top:133px" width="12" height="16" viewBox="0 0 12 16"><rect x="0.5" y="2.5" width="11" height="2" fill="#333"/><rect x="4" y="0.8" width="4" height="2" fill="#333"/><path d="M1.5 5 L2.5 15 L9.5 15 L10.5 5 Z" fill="#3a3a3a" stroke="#111" stroke-width="0.8"/><path d="M4 6.5v7.5M6 6.5v7.5M8 6.5v7.5" stroke="#999" stroke-width="0.8"/></svg>
<div class="lbl" style="left:1056px;top:135.5px;font-size:9.3px;color:#111;line-height:11px">Delete</div>
<!-- capability PN -->
<div class="lbl" style="left:1047px;top:173px;font-size:16.2px;color:#111;line-height:18px">Capability Part Number:</div>
<div class="req" style="left:1244px;top:174px">*</div>
<div class="a sunkR" style="left:895px;top:193px;width:475px;height:29px"></div>
<div class="drop" style="left:1355px;top:195px;width:14px;height:25px"></div>
<div class="lbl" style="left:897px;top:196px;font:bold 19.9px 'Liberation Sans';color:#1212bc;line-height:24px">69-54784-1</div>
<div class="lbl" style="left:1089px;top:225px;font-size:16.5px;color:#111;line-height:18px">Description:</div>
<div class="a" style="left:895px;top:245px;width:477px;height:27px;background:#d6d3ce;border:1px solid #303030"></div>
<div class="lbl" style="left:897px;top:247px;font:bold 16.2px 'Liberation Sans';color:#000;line-height:20px">HYDRAULIC SWIVEL</div>
<div class="lbl" style="left:1095px;top:277px;font-size:16.2px;color:#111;line-height:18px">Customer:</div>
<div class="a sunkR" style="left:895px;top:298px;width:475px;height:28px"></div>
<div class="drop" style="left:1355px;top:300px;width:14px;height:24px"></div>
<div class="lbl" style="left:898px;top:300px;font:bold 20.3px 'Liberation Sans';color:#1212bc;line-height:24px">Blue Air</div>
<div class="lbl" style="left:1072px;top:340px;font-size:16.2px;color:#111;line-height:18px">Contract Type:</div>
<div class="a sunkR" style="left:895px;top:361px;width:475px;height:28px"></div>
<div class="drop" style="left:1355px;top:363px;width:14px;height:24px"></div>
<div class="lbl" style="left:898px;top:363px;font:bold 20.3px 'Liberation Sans';color:#1212bc;line-height:24px">BlueAir_WS</div>
<!-- treatment -->
<div class="lbl" style="left:940px;top:402px;font-size:16.2px;color:#111;line-height:18px">Treatment:</div>
<div class="req" style="left:1035px;top:403px">*</div>
<div class="a sunkR" style="left:895px;top:424px;width:167px;height:25px"></div>
<div class="drop" style="left:1048px;top:426px;width:13px;height:21px"></div>
<div class="lbl" style="left:897px;top:426px;font:bold 16.2px 'Liberation Sans';color:#1212bc;line-height:20px">REP</div>
<div class="chk" style="left:1104px;top:429px;width:10px;height:10px;box-shadow:inset 1px 1px #505050,inset -1px -1px #f0f0f0"></div>
<svg class="a" style="left:1106px;top:431px" width="7" height="7" viewBox="0 0 7 7"><path d="M0.8 3.5 L2.6 5.4 L6.2 1.2" stroke="#000" stroke-width="1.5" fill="none"/></svg>
<div class="lbl" style="left:1122px;top:425px;font:bold 17px 'Liberation Sans';color:#000;line-height:20px">:Fixed Spare Part Cost</div>
<div class="lbl" style="left:921px;top:465px;font-size:16.4px;color:#111;line-height:18px">Fixed Price EUR :</div>
<div class="req" style="left:1077px;top:466px">*</div>
<div class="a" style="left:895px;top:486px;width:183px;height:31px;background:#fff;border:1px solid #222"></div>
<div class="lbl" style="left:956px;top:488px;font:bold 19.6px 'Liberation Sans';color:#1212bc;line-height:24px">127.00</div>
<div class="chk" style="left:1104px;top:492px;width:10px;height:10px;box-shadow:inset 1px 1px #505050,inset -1px -1px #f0f0f0"></div>
<svg class="a" style="left:1106px;top:494px" width="7" height="7" viewBox="0 0 7 7"><path d="M0.8 3.5 L2.6 5.4 L6.2 1.2" stroke="#000" stroke-width="1.5" fill="none"/></svg>
<div class="lbl" style="left:1122px;top:489px;font:bold 16.8px 'Liberation Sans';color:#7a0a14;line-height:20px">:Fixed Price Per Unit</div>
<!-- man hours -->
<div class="lbl" style="left:921px;top:528px;font:bold 16.9px 'Liberation Sans';color:#000;line-height:20px">Fixed Man-Hours:</div>
<div class="lbl" style="left:917px;top:551.5px;font-size:15.9px;color:#111;line-height:18px">Hour:</div>
<div class="req" style="left:965px;top:552px">*</div>
<div class="lbl" style="left:1009px;top:551.5px;font-size:16.1px;color:#111;line-height:18px">Minute:</div>
<div class="req" style="left:1076px;top:552px">*</div>
<div class="a sunk" style="left:895px;top:570px;width:70px;height:32px"></div>
<div class="lbl" style="left:924.5px;top:572.5px;font:bold 19.6px 'Liberation Sans';color:#000;line-height:24px">1</div>
<div class="drop up" style="left:965px;top:571px;width:13px;height:15px"></div>
<div class="drop" style="left:965px;top:586px;width:13px;height:16px"></div>
<div class="a sunk" style="left:992px;top:570px;width:69px;height:32px"></div>
<div class="lbl" style="left:1020.5px;top:572.5px;font:bold 19.6px 'Liberation Sans';color:#000;line-height:24px">5</div>
<div class="drop up" style="left:1061px;top:571px;width:14px;height:15px"></div>
<div class="drop" style="left:1061px;top:586px;width:14px;height:16px"></div>
<div class="lbl" style="left:909px;top:612px;font-size:16.3px;color:#111;line-height:18px">Add Man-Hour Price EUR :</div>
<div class="req" style="left:1133px;top:613px">*</div>
<div class="a" style="left:909px;top:633px;width:183px;height:31px;background:#fff;border:1px solid #222"></div>
<div class="lbl" style="left:976px;top:634.5px;font:bold 19.6px 'Liberation Sans';color:#1212bc;line-height:24px">10.00</div>
<div class="lbl" style="left:947px;top:675px;font:bold 16.4px 'Liberation Sans';color:#cc1010;line-height:18px">AOG Fee EUR :</div>
<div class="a" style="left:909px;top:697px;width:183px;height:30px;background:#fff;border:1px solid #222"></div>
<div class="lbl" style="left:970px;top:698px;font:bold 19.6px 'Liberation Sans';color:#1212bc;line-height:24px">100.00</div>
<div class="a" style="left:992px;top:701px;width:1px;height:19px;background:#000"></div>
<!-- callout -->
<svg class="a" style="left:1100px;top:420px;z-index:5" width="150" height="150" viewBox="0 0 150 150">
<path d="M12.2 13.8 L100.4 127 L124.5 102.4 Z" fill="#1496f8"/>
<circle cx="122" cy="123.6" r="20" fill="#1496f8" stroke="#2a2a2a" stroke-width="1.2"/><circle cx="122" cy="123.6" r="18.8" fill="none" stroke="#e8f0ff" stroke-width="0.7"/>
<text x="114" y="130" textLength="17" lengthAdjust="spacingAndGlyphs" font-family="Liberation Serif" font-weight="bold" font-size="14.5" fill="#fff">12</text>
</svg>
<div class="a" style="left:0;top:747px;width:1398px;height:2px;background:#f4f4f4"></div>
</body></html>
